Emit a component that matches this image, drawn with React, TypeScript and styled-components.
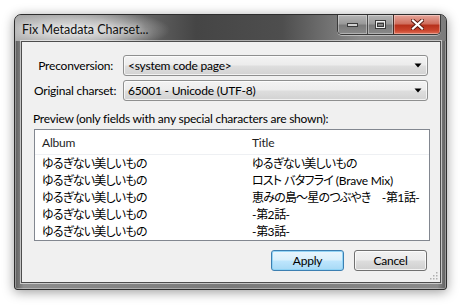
import React from "react";
import styled, { createGlobalStyle } from "styled-components";

const Global = createGlobalStyle`
  html, body { margin: 0; padding: 0; background: #ffffff; }
  body { font-family: Lato, "Noto Sans", sans-serif; font-size: 12px; color: #000; letter-spacing: -0.22px; }
  * { box-sizing: border-box; }
`;

const Page = styled.div`
  width: 462px;
  height: 305px;
  padding: 14px 0 0 14px;
  background: #ffffff;
`;

const Window = styled.div`
  width: 433px;
  height: 276px;
  display: flex;
  flex-direction: column;
  border: 1px solid #2e2e2e;
  border-radius: 7px 7px 3px 3px;
  background: linear-gradient(90deg, #5e5e5e 0%, #8e8e8e 2%, #7a7a7a 50%, #8a8a8a 98%, #5e5e5e 100%);
  box-shadow: 0 2px 12px rgba(0, 0, 0, 0.4), inset 0 0 0 1px rgba(255, 255, 255, 0.35);
  overflow: hidden;
`;

const TitleBar = styled.div`
  height: 26px;
  flex: none;
  display: flex;
  justify-content: space-between;
  align-items: flex-start;
  padding: 0 5px 0 7px;
  background:
    radial-gradient(ellipse 95px 22px at 60px 15px, rgba(235, 235, 235, 0.95) 0%, rgba(220, 220, 220, 0.7) 45%, rgba(200, 200, 200, 0) 100%),
    linear-gradient(90deg, #9e9e9e 0%, #7e7e7e 20%, #454545 42%, #4e4e4e 62%, #8a8a8a 80%, #7c7c7c 100%);
`;

const TitleText = styled.div`
  margin-top: 7px;
  font-family: Lato, "Noto Sans", sans-serif;
  font-size: 12.5px;
  line-height: 16px;
  letter-spacing: 0;
  color: #111;
  text-shadow: 0 0 6px rgba(255, 255, 255, 0.9);
`;

const CaptionButtons = styled.div`
  display: flex;
  height: 20px;
  border: 1px solid #3a3a3a;
  border-top: none;
  border-radius: 0 0 5px 5px;
  overflow: hidden;
  box-shadow: 0 1px 0 rgba(255, 255, 255, 0.45);
`;

const CaptionButton = styled.div<{ $w: number; $close?: boolean }>`
  width: ${(p) => p.$w}px;
  height: 100%;
  display: flex;
  align-items: center;
  justify-content: center;
  border-left: ${(p) => (p.$close ? "1px solid #4a2a24" : "1px solid #4a4a4a")};
  box-shadow: inset 0 0 0 1px rgba(255, 255, 255, 0.35);
  background: ${(p) =>
    p.$close
      ? "linear-gradient(180deg, #e6a59a 0%, #d0705f 45%, #b8321c 55%, #c9432b 80%, #e07058 100%)"
      : "linear-gradient(180deg, #b5b5b5 0%, #9a9a9a 45%, #7a7a7a 55%, #8a8a8a 100%)"};
  &:first-child { border-left: none; }
`;

const Client = styled.div`
  flex: 1;
  margin: 0 5px 6px 6px;
  position: relative;
  display: flex;
  flex-direction: column;
  background: #f0f0f0;
  border: 1px solid #4d4d4d;
  box-shadow: 0 0 0 1px rgba(255, 255, 255, 0.55);
`;

const Form = styled.div`
  display: grid;
  grid-template-columns: 79px 1fr;
  column-gap: 10px;
  row-gap: 4px;
  padding: 13px 12px 0 12px;
  align-items: center;
`;

const Label = styled.div`
  text-align: right;
  font-size: 12px;
  line-height: 16px;
  white-space: nowrap;
`;

const Combo = styled.div`
  height: 21px;
  display: flex;
  align-items: center;
  justify-content: space-between;
  padding: 0 5px 0 4px;
  border: 1px solid #8e8f8f;
  border-radius: 3px;
  background: linear-gradient(180deg, #f3f3f3 0%, #ececec 48%, #dedede 52%, #d2d2d2 100%);
  box-shadow: inset 0 0 0 1px rgba(255, 255, 255, 0.7);
  font-size: 12px;
`;

const PreviewLabel = styled.div`
  margin: 10px 0 0 11px;
  line-height: 15px;
  font-size: 12px;
`;

const ListView = styled.div`
  margin: 3px 10px 0 12px;
  height: 112px;
  border: 1px solid #828790;
  background: #ffffff;
  display: flex;
  flex-direction: column;
`;

const HeaderRow = styled.div`
  height: 25px;
  flex: none;
  display: grid;
  grid-template-columns: 210px 1fr;
  align-items: center;
  border-bottom: 1px solid #eef0f3;
  font-size: 12px;
`;

const HeaderCell = styled.div`
  padding-left: 7px;
  color: #1e1e1e;
`;

const Row = styled.div`
  height: 17px;
  display: grid;
  grid-template-columns: 210px 1fr;
  align-items: center;
`;

const Cell = styled.div`
  padding-left: 7px;
  white-space: nowrap;
  font-family: Lato, "Noto Sans CJK JP", sans-serif;
  font-size: 12px;
  line-height: 16px;
`;

const Jp = styled.span`
  font-family: "Noto Sans CJK JP", sans-serif;
  font-feature-settings: "palt";
  letter-spacing: -0.8px;
`;

const ButtonRow = styled.div`
  display: flex;
  justify-content: flex-end;
  gap: 10px;
  padding: 9px 13px 0 0;
`;

const Button = styled.div<{ $default?: boolean }>`
  width: 73px;
  height: 21px;
  display: flex;
  align-items: center;
  justify-content: center;
  border-radius: 3px;
  font-size: 12px;
  border: 1px solid ${(p) => (p.$default ? "#3c7fb1" : "#707070")};
  background: ${(p) =>
    p.$default
      ? "linear-gradient(180deg, #eaf6fd 0%, #d9f0fc 48%, #bee6fd 52%, #a7d9f5 100%)"
      : "linear-gradient(180deg, #f2f2f2 0%, #ebebeb 48%, #dddddd 52%, #cfcfcf 100%)"};
  box-shadow: inset 0 0 0 1px ${(p) => (p.$default ? "rgba(140, 210, 245, 0.9)" : "rgba(255, 255, 255, 0.75)")};
`;

const Grip = styled.svg`
  position: absolute;
  right: 2px;
  bottom: 2px;
`;

const Arrow = () => (
  <svg width="8" height="5" viewBox="0 0 8 5">
    <path d="M0.5 0.5 H7.5 L4 4.5 Z" fill="#000" />
  </svg>
);

const rows: [string, string][] = [
  ["ゆるぎない美しいもの", "ゆるぎない美しいもの"],
  ["ゆるぎない美しいもの", "ロスト バタフライ (Brave Mix)"],
  ["ゆるぎない美しいもの", "恵みの島〜星のつぶやき　-第1話-"],
  ["ゆるぎない美しいもの", "-第2話-"],
  ["ゆるぎない美しいもの", "-第3話-"],
];

const cjk = /([\u3000-\u30ff\u3400-\u9fff\uff00-\uffef]+)/;

const Mixed = ({ text }: { text: string }) => (
  <>
    {text.split(cjk).map((part, i) =>
      part === "" ? null : cjk.test(part) ? <Jp key={i}>{part}</Jp> : <span key={i}>{part}</span>
    )}
  </>
);

export default function App() {
  return (
    <>
      <Global />
      <Page>
        <Window>
          <TitleBar>
            <TitleText>Fix Metadata Charset...</TitleText>
            <CaptionButtons>
              <CaptionButton $w={29}>
                <svg width="11" height="4" viewBox="0 0 11 4">
                  <rect x="0.5" y="0.5" width="10" height="3" fill="#cfcfcf" stroke="#3a3a3a" strokeWidth="1" />
                </svg>
              </CaptionButton>
              <CaptionButton $w={26}>
                <svg width="11" height="9" viewBox="0 0 11 9">
                  <rect x="0.5" y="0.5" width="10" height="8" fill="none" stroke="#3a3a3a" strokeWidth="1" />
                  <rect x="1.5" y="1.5" width="8" height="6" fill="none" stroke="#f0f0f0" strokeWidth="1" />
                  <rect x="2.5" y="3.5" width="6" height="3" fill="none" stroke="#3a3a3a" strokeWidth="1" />
                </svg>
              </CaptionButton>
              <CaptionButton $w={47} $close>
                <svg width="13" height="11" viewBox="0 0 13 11">
                  <path d="M2 1.5 L11 9.5 M11 1.5 L2 9.5" stroke="#5a1a10" strokeWidth="4" strokeLinecap="square" />
                  <path d="M2 1.5 L11 9.5 M11 1.5 L2 9.5" stroke="#ffffff" strokeWidth="2.2" strokeLinecap="square" />
                </svg>
              </CaptionButton>
            </CaptionButtons>
          </TitleBar>
          <Client>
            <Form>
              <Label>Preconversion:</Label>
              <Combo>
                <span>&lt;system code page&gt;</span>
                <Arrow />
              </Combo>
              <Label>Original charset:</Label>
              <Combo>
                <span>65001 - Unicode (UTF-8)</span>
                <Arrow />
              </Combo>
            </Form>
            <PreviewLabel>Preview (only fields with any special characters are shown):</PreviewLabel>
            <ListView>
              <HeaderRow>
                <HeaderCell>Album</HeaderCell>
                <HeaderCell>Title</HeaderCell>
              </HeaderRow>
              {rows.map(([a, t], i) => (
                <Row key={i}>
                  <Cell>
                    <Mixed text={a} />
                  </Cell>
                  <Cell>
                    <Mixed text={t} />
                  </Cell>
                </Row>
              ))}
            </ListView>
            <ButtonRow>
              <Button $default>Apply</Button>
              <Button>Cancel</Button>
            </ButtonRow>
            <Grip width="10" height="10" viewBox="0 0 10 10">
              {[
                [8, 2],
                [8, 5],
                [5, 5],
                [8, 8],
                [5, 8],
                [2, 8],
              ].map(([x, y], i) => (
                <rect key={i} x={x} y={y} width="1.5" height="1.5" fill="#b0b0b0" />
              ))}
            </Grip>
          </Client>
        </Window>
      </Page>
    </>
  );
}
